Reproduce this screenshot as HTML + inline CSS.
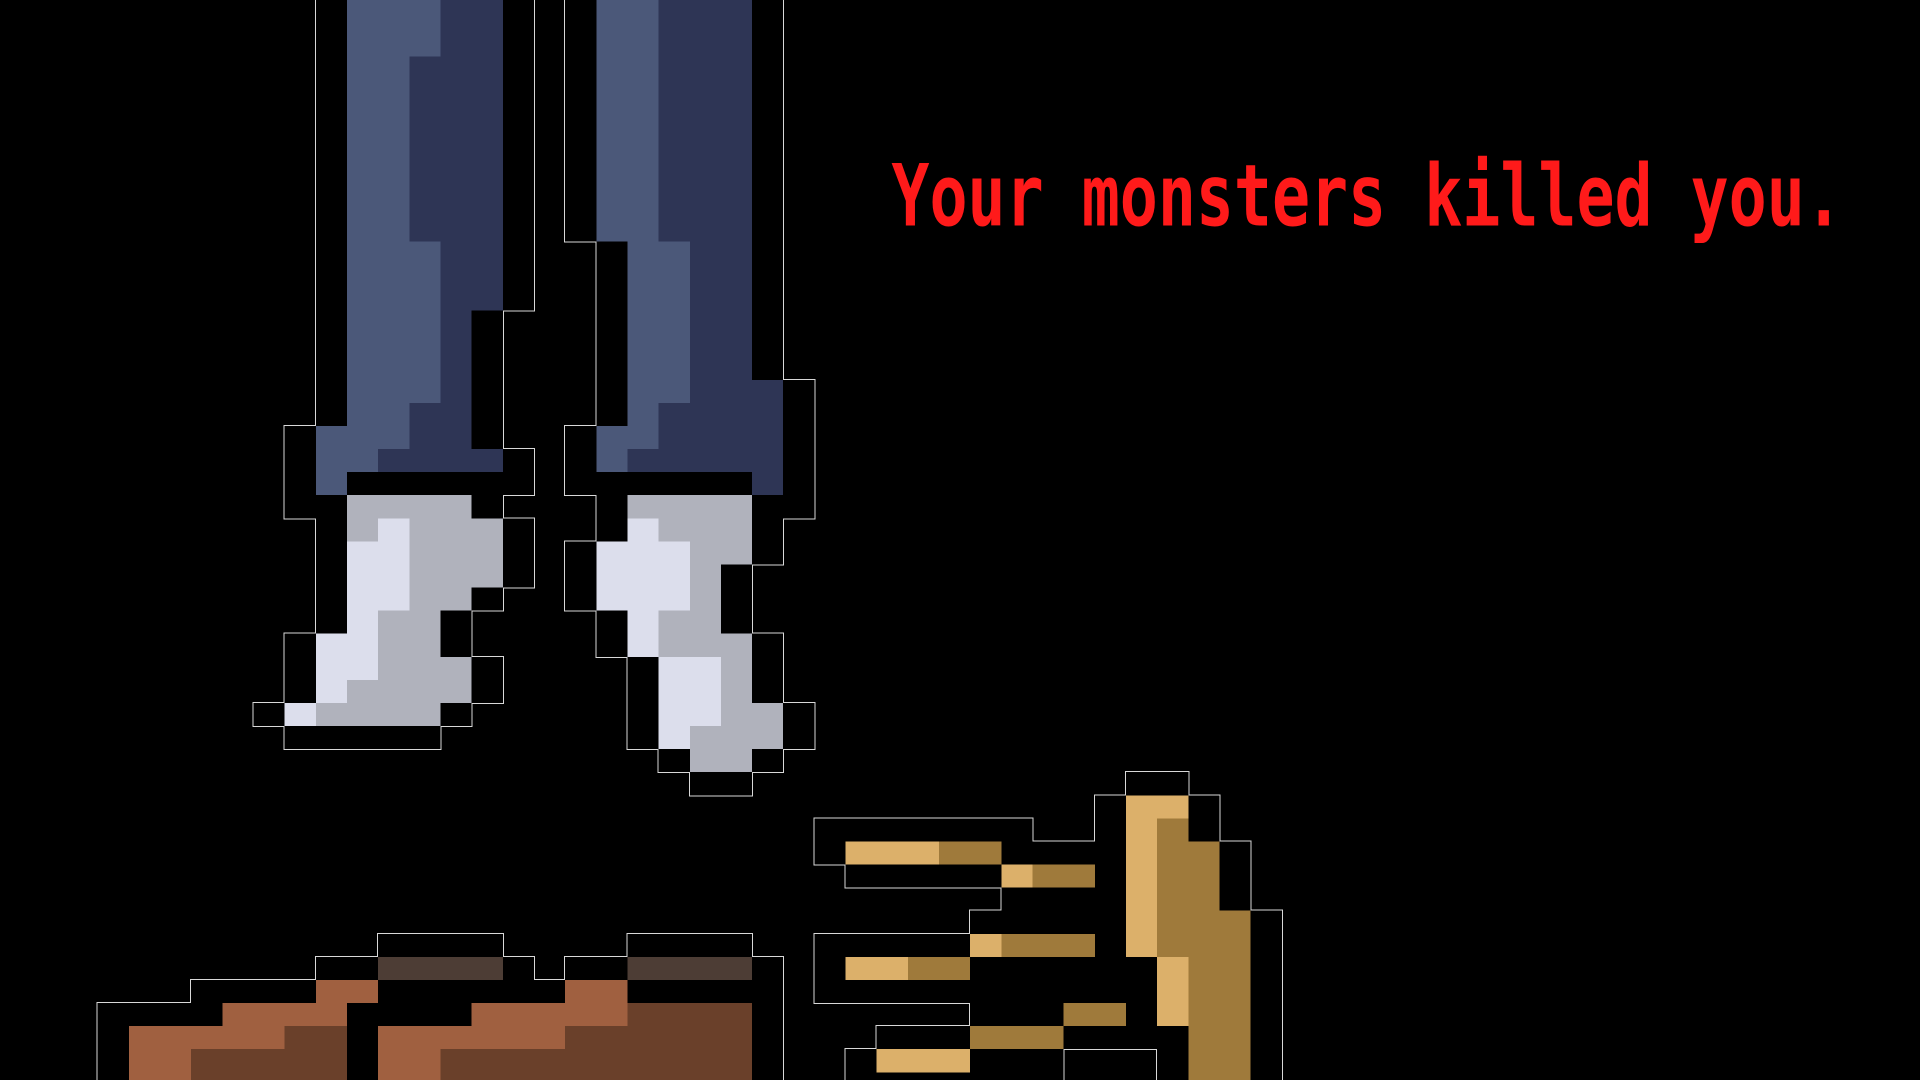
<!DOCTYPE html>
<html><head><meta charset="utf-8"><style>
html,body{margin:0;padding:0;background:#000;width:1920px;height:1080px;overflow:hidden}
svg{display:block}
</style></head><body>
<svg width="1920" height="1080" viewBox="0 0 1568 882" preserveAspectRatio="none" xmlns="http://www.w3.org/2000/svg">
<defs>
<filter id="ol" x="-5%" y="-5%" width="110%" height="110%">
<feMorphology in="SourceAlpha" operator="dilate" radius="0.9" result="d"/>
<feFlood flood-color="#d8d8d8"/>
<feComposite in2="d" operator="in" result="g"/>
<feMerge><feMergeNode in="g"/><feMergeNode in="SourceGraphic"/></feMerge>
</filter>
</defs>
<rect width="1568" height="882" fill="#000"/>
<g filter="url(#ol)">
<g transform="translate(207,8.6) scale(25.45,18.85)" shape-rendering="crispEdges">
<g fill="#000">
<rect x="2" y="-1" width="7" height="14"/><rect x="2" y="13" width="6" height="5"/>
<rect x="1" y="18" width="7" height="1"/><rect x="1" y="19" width="8" height="2"/>
<rect x="1" y="21" width="7" height="1"/><rect x="2" y="22" width="7" height="3"/>
<rect x="2" y="25" width="6" height="1"/><rect x="2" y="26" width="5" height="1"/>
<rect x="1" y="27" width="6" height="1"/><rect x="1" y="28" width="7" height="2"/>
<rect x="0" y="30" width="7" height="1"/><rect x="1" y="31" width="5" height="1"/>
</g>
<g fill="#4b5879">
<rect x="3" y="-1" width="3" height="3"/><rect x="3" y="2" width="2" height="8"/>
<rect x="3" y="10" width="3" height="7"/><rect x="3" y="17" width="2" height="1"/>
<rect x="2" y="18" width="3" height="1"/><rect x="2" y="19" width="2" height="1"/>
<rect x="2" y="20" width="1" height="1"/>
</g>
<g fill="#2e3654">
<rect x="6" y="-1" width="2" height="3"/><rect x="5" y="2" width="3" height="8"/>
<rect x="6" y="10" width="2" height="3"/><rect x="6" y="13" width="1" height="4"/>
<rect x="5" y="17" width="2" height="2"/><rect x="4" y="19" width="4" height="1"/>
</g>
<g fill="#b0b2bc">
<rect x="3" y="21" width="4" height="1"/><rect x="3" y="22" width="1" height="1"/>
<rect x="5" y="22" width="3" height="3"/><rect x="5" y="25" width="2" height="1"/>
<rect x="4" y="26" width="2" height="2"/><rect x="4" y="28" width="3" height="1"/>
<rect x="3" y="29" width="4" height="1"/><rect x="2" y="30" width="4" height="1"/>
</g>
<g fill="#dcdeec">
<rect x="4" y="22" width="1" height="1"/><rect x="3" y="23" width="2" height="3"/>
<rect x="3" y="26" width="1" height="1"/><rect x="2" y="27" width="2" height="2"/>
<rect x="2" y="29" width="1" height="1"/><rect x="1" y="30" width="1" height="1"/>
</g>
<g fill="#000">
<rect x="10" y="-1" width="7" height="11"/><rect x="11" y="10" width="6" height="6"/>
<rect x="11" y="16" width="7" height="2"/><rect x="10" y="18" width="8" height="3"/>
<rect x="11" y="21" width="7" height="1"/><rect x="11" y="22" width="6" height="1"/>
<rect x="10" y="23" width="7" height="1"/><rect x="10" y="24" width="6" height="2"/>
<rect x="11" y="26" width="5" height="1"/><rect x="11" y="27" width="6" height="1"/>
<rect x="12" y="28" width="5" height="2"/><rect x="12" y="30" width="6" height="2"/>
<rect x="13" y="32" width="4" height="1"/><rect x="14" y="33" width="2" height="1"/>
</g>
<g fill="#4b5879">
<rect x="11" y="-1" width="2" height="11"/><rect x="12" y="10" width="2" height="7"/>
<rect x="12" y="17" width="1" height="1"/><rect x="11" y="18" width="2" height="1"/>
<rect x="11" y="19" width="1" height="1"/>
</g>
<g fill="#2e3654">
<rect x="13" y="-1" width="3" height="11"/><rect x="14" y="10" width="2" height="6"/>
<rect x="14" y="16" width="3" height="1"/><rect x="13" y="17" width="4" height="2"/>
<rect x="12" y="19" width="5" height="1"/><rect x="16" y="20" width="1" height="1"/>
</g>
<g fill="#b0b2bc">
<rect x="12" y="21" width="4" height="1"/><rect x="13" y="22" width="3" height="1"/>
<rect x="14" y="23" width="2" height="1"/><rect x="14" y="24" width="1" height="2"/>
<rect x="13" y="26" width="2" height="1"/><rect x="13" y="27" width="3" height="1"/>
<rect x="15" y="28" width="1" height="2"/><rect x="15" y="30" width="2" height="1"/>
<rect x="14" y="31" width="3" height="1"/><rect x="14" y="32" width="2" height="1"/>
</g>
<g fill="#dcdeec">
<rect x="12" y="22" width="1" height="1"/><rect x="11" y="23" width="3" height="3"/>
<rect x="12" y="26" width="1" height="2"/><rect x="13" y="28" width="2" height="3"/>
<rect x="13" y="31" width="1" height="1"/>
</g>
<g fill="#000">
<rect x="28" y="33" width="2" height="1"/><rect x="27" y="34" width="4" height="1"/>
<rect x="18" y="35" width="7" height="1"/><rect x="27" y="35" width="4" height="1"/>
<rect x="18" y="36" width="14" height="1"/><rect x="19" y="37" width="13" height="1"/>
<rect x="24" y="38" width="8" height="1"/><rect x="23" y="39" width="10" height="1"/>
<rect x="18" y="40" width="15" height="3"/><rect x="23" y="43" width="10" height="1"/>
<rect x="20" y="44" width="13" height="1"/><rect x="19" y="45" width="7" height="2"/>
<rect x="29" y="45" width="4" height="2"/>
</g>
<g fill="#dcb06b">
<rect x="28" y="34" width="2" height="1"/><rect x="28" y="35" width="1" height="6"/>
<rect x="19" y="36" width="3" height="1"/><rect x="24" y="37" width="1" height="1"/>
<rect x="23" y="40" width="1" height="1"/><rect x="19" y="41" width="2" height="1"/>
<rect x="29" y="41" width="1" height="3"/><rect x="20" y="45" width="3" height="1"/>
</g>
<g fill="#9f7a3a">
<rect x="29" y="35" width="1" height="1"/><rect x="29" y="36" width="2" height="3"/>
<rect x="22" y="36" width="2" height="1"/><rect x="25" y="37" width="2" height="1"/>
<rect x="29" y="39" width="3" height="2"/><rect x="24" y="40" width="3" height="1"/>
<rect x="21" y="41" width="2" height="1"/><rect x="30" y="41" width="2" height="6"/>
<rect x="26" y="43" width="2" height="1"/><rect x="23" y="44" width="3" height="1"/>
</g>
<g fill="#000">
<rect x="4" y="40" width="4" height="1"/><rect x="12" y="40" width="4" height="1"/>
<rect x="2" y="41" width="7" height="1"/><rect x="10" y="41" width="7" height="1"/>
<rect x="-2" y="42" width="19" height="1"/><rect x="-5" y="43" width="22" height="4"/>
</g>
<g fill="#4d3c36">
<rect x="4" y="41" width="4" height="1"/><rect x="12" y="41" width="4" height="1"/>
</g>
<g fill="#a0603f">
<rect x="2" y="42" width="2" height="1"/><rect x="10" y="42" width="2" height="1"/>
<rect x="-1" y="43" width="4" height="1"/><rect x="7" y="43" width="5" height="1"/>
<rect x="-4" y="44" width="5" height="1"/><rect x="4" y="44" width="6" height="1"/>
<rect x="-4" y="45" width="2" height="2"/><rect x="4" y="45" width="2" height="2"/>
</g>
<g fill="#6b3f2c">
<rect x="12" y="43" width="4" height="1"/><rect x="1" y="44" width="2" height="1"/>
<rect x="10" y="44" width="6" height="1"/><rect x="-2" y="45" width="5" height="2"/>
<rect x="6" y="45" width="10" height="2"/>
</g>
</g>
</g>
<text x="728" y="184" font-family="'DejaVu Sans Mono', 'Liberation Mono', monospace" font-weight="bold" font-size="70" fill="#ff1a1a" textLength="777" lengthAdjust="spacingAndGlyphs">Your monsters killed you.</text>
</svg>
</body></html>
